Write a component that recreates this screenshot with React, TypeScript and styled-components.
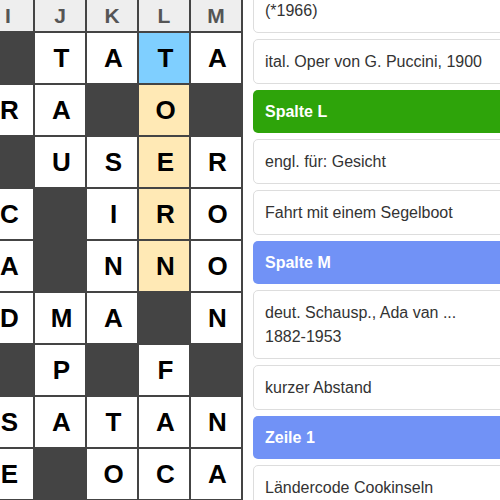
import React from "react";
import styled, { createGlobalStyle } from "styled-components";

const GlobalStyle = createGlobalStyle`
  html, body { margin: 0; padding: 0; background: #fff; }
  body { font-family: "Liberation Sans", Arial, sans-serif; }
`;

const Viewport = styled.div`
  width: 500px;
  height: 500px;
  overflow: hidden;
  display: flex;
  align-items: flex-start;
`;

const Board = styled.div`
  flex-shrink: 0;
  margin-left: -19px;
  margin-top: -2px;
  display: grid;
  grid-template-columns: repeat(5, 50px);
  gap: 2px;
  padding: 2px;
  background: #444;
`;

const HeadCell = styled.div`
  height: 31px;
  background: #eeeeee;
  color: #555;
  font-weight: bold;
  font-size: 21px;
  display: flex;
  align-items: center;
  justify-content: center;
`;

type Kind = "dark" | "plain" | "active" | "word";

const bg: Record<Kind, string> = {
  dark: "#444444",
  plain: "#ffffff",
  active: "#7fcfff",
  word: "#ffe9b5",
};

const Cell = styled.div<{ $kind: Kind }>`
  height: 50px;
  background: ${(p) => bg[p.$kind]};
  color: #000;
  font-weight: bold;
  font-size: 26px;
  display: flex;
  align-items: center;
  justify-content: center;
  padding-left: 3px;
  box-sizing: border-box;
`;

const ClueList = styled.div`
  flex-shrink: 0;
  width: 290px;
  margin-left: 10px;
  margin-top: -36px;
  display: flex;
  flex-direction: column;
  gap: 6px;
`;

const Clue = styled.div`
  border: 1px solid #dddddd;
  border-radius: 5px;
  padding: 10px 11px;
  font-size: 16px;
  line-height: 23px;
  color: #333;
  background: #fff;
`;

const ClueLine = styled.div`
  & + & { margin-top: 1px; }
`;

const GroupHead = styled.div<{ $color: string }>`
  border-radius: 5px;
  padding: 10px 12px;
  height: 43px;
  box-sizing: border-box;
  font-size: 16px;
  line-height: 23px;
  font-weight: bold;
  color: #fff;
  background: ${(p) => p.$color};
`;

const heads = ["I", "J", "K", "L", "M"];

const rows: string[] = [
  "#TATA",
  "RA#O#",
  "#USER",
  "C#IRO",
  "A#NNO",
  "DMA#N",
  "#P#F#",
  "SATAN",
  "E#OCA",
];

function kindOf(r: number, c: number, ch: string): Kind {
  if (ch === "#") return "dark";
  if (c === 3 && r === 0) return "active";
  if (c === 3 && r >= 1 && r <= 4) return "word";
  return "plain";
}

type Item =
  | { type: "clue"; lines: string[] }
  | { type: "head"; text: string; color: string };

const items: Item[] = [
  { type: "clue", lines: ["dt. Schauspielerin", "(*1966)"] },
  { type: "clue", lines: ["ital. Oper von G. Puccini, 1900"] },
  { type: "head", text: "Spalte L", color: "#2ea40a" },
  { type: "clue", lines: ["engl. für: Gesicht"] },
  { type: "clue", lines: ["Fahrt mit einem Segelboot"] },
  { type: "head", text: "Spalte M", color: "#7192f6" },
  { type: "clue", lines: ["deut. Schausp., Ada van ...", "1882-1953"] },
  { type: "clue", lines: ["kurzer Abstand"] },
  { type: "head", text: "Zeile 1", color: "#7192f6" },
  { type: "clue", lines: ["Ländercode Cookinseln"] },
];

export default function App() {
  return (
    <>
      <GlobalStyle />
      <Viewport>
        <Board>
          {heads.map((h) => (
            <HeadCell key={h}>{h}</HeadCell>
          ))}
          {rows.map((row, r) =>
            row.split("").map((ch, c) => (
              <Cell key={`${r}-${c}`} $kind={kindOf(r, c, ch)}>
                {ch === "#" ? "" : ch}
              </Cell>
            ))
          )}
        </Board>
        <ClueList>
          {items.map((it, i) =>
            it.type === "head" ? (
              <GroupHead key={i} $color={it.color}>
                {it.text}
              </GroupHead>
            ) : (
              <Clue key={i}>
                {it.lines.map((l, j) => (
                  <ClueLine key={j}>{l}</ClueLine>
                ))}
              </Clue>
            )
          )}
        </ClueList>
      </Viewport>
    </>
  );
}
